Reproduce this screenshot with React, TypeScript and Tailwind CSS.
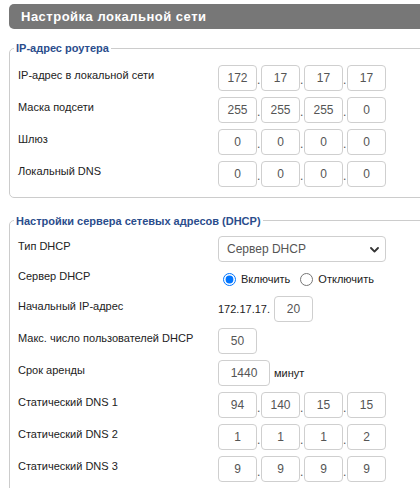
import React from "react";

const font = { fontFamily: '"Liberation Sans", Arial, sans-serif' };

function Box({ v, w = "w-[39px]" }: { v: string; w?: string }) {
  return (
    <input
      readOnly
      value={v}
      className={`${w} h-[26px] border border-[#cfcfcf] rounded-[4px] text-center text-[12px] text-[#555] bg-white outline-none`}
      style={font}
    />
  );
}

function Ip({ parts }: { parts: string[] }) {
  return (
    <div className="flex items-center">
      {parts.map((p, i) => (
        <React.Fragment key={i}>
          <Box v={p} />
          {i < 3 && <span className="w-[4px] text-[12px] text-[#555] leading-none pt-[5px]">.</span>}
        </React.Fragment>
      ))}
    </div>
  );
}

function Row({ label, children, h = "h-[32px]" }: { label: string; children: React.ReactNode; h?: string }) {
  return (
    <div className={`flex items-center ${h}`}>
      <div className="w-[208px] pl-[8px] pb-[5px] text-[11px] text-[#222]">{label}</div>
      <div className="flex items-center">{children}</div>
    </div>
  );
}

export default function App() {
  return (
    <div className="w-[420px] h-[488px] overflow-hidden bg-white" style={font}>
      <div className="ml-[9px] w-[460px] pt-[4px]">
        <div className="h-[25px] bg-[#777777] rounded-l-[5px] flex items-center pl-[12px]">
          <span className="text-white font-bold text-[13px] tracking-[0.5px]">Настройка локальной сети</span>
        </div>

        <fieldset className="mt-[11px] border border-[#cccccc] rounded-[5px] pt-[5px] pb-[7px]">
          <legend className="ml-[4px] px-[2px] text-[11px] font-bold text-[#2b4d8c]">IP-адрес роутера</legend>
          <Row label="IP-адрес в локальной сети"><Ip parts={["172", "17", "17", "17"]} /></Row>
          <Row label="Маска подсети"><Ip parts={["255", "255", "255", "0"]} /></Row>
          <Row label="Шлюз"><Ip parts={["0", "0", "0", "0"]} /></Row>
          <Row label="Локальный DNS"><Ip parts={["0", "0", "0", "0"]} /></Row>
        </fieldset>

        <fieldset className="mt-[15px] border border-[#cccccc] rounded-[5px] pt-[4px] pb-[20px]">
          <legend className="ml-[4px] px-[2px] text-[11px] font-bold text-[#2b4d8c]">Настройки сервера сетевых адресов (DHCP)</legend>
          <Row label="Тип DHCP">
            <div className="relative w-[168px] h-[26px] border border-[#cfcfcf] rounded-[4px] flex items-center pl-[8px] text-[12px] text-[#555]">
              Сервер DHCP
              <svg className="absolute right-[6px] top-[10px]" width="9" height="6" viewBox="0 0 9 6">
                <path d="M1 1l3.5 3.5L8 1" fill="none" stroke="#333" strokeWidth="1.8" strokeLinecap="round" strokeLinejoin="round" />
              </svg>
            </div>
          </Row>
          <Row label="Сервер DHCP" h="h-[28px]">
            <label className="flex items-center text-[11px] text-[#222]">
              <input type="radio" name="dhcp" defaultChecked className="ml-[5px] mr-[3px] w-[13px] h-[13px] m-0" />
              <span className="ml-[2px]">Включить</span>
            </label>
            <label className="flex items-center text-[11px] text-[#222]">
              <input type="radio" name="dhcp" className="ml-[10px] mr-[3px] w-[13px] h-[13px] m-0" />
              <span className="ml-[2px]">Отключить</span>
            </label>
          </Row>
          <Row label="Начальный IP-адрес">
            <span className="text-[11px] text-[#222] mr-[4px]">172.17.17.</span>
            <Box v="20" />
          </Row>
          <Row label="Макс. число пользователей DHCP"><Box v="50" /></Row>
          <Row label="Срок аренды">
            <Box v="1440" w="w-[52px]" />
            <span className="ml-[4px] text-[11px] text-[#222]">минут</span>
          </Row>
          <Row label="Статический DNS 1"><Ip parts={["94", "140", "15", "15"]} /></Row>
          <Row label="Статический DNS 2"><Ip parts={["1", "1", "1", "2"]} /></Row>
          <Row label="Статический DNS 3"><Ip parts={["9", "9", "9", "9"]} /></Row>
        </fieldset>
      </div>
    </div>
  );
}
